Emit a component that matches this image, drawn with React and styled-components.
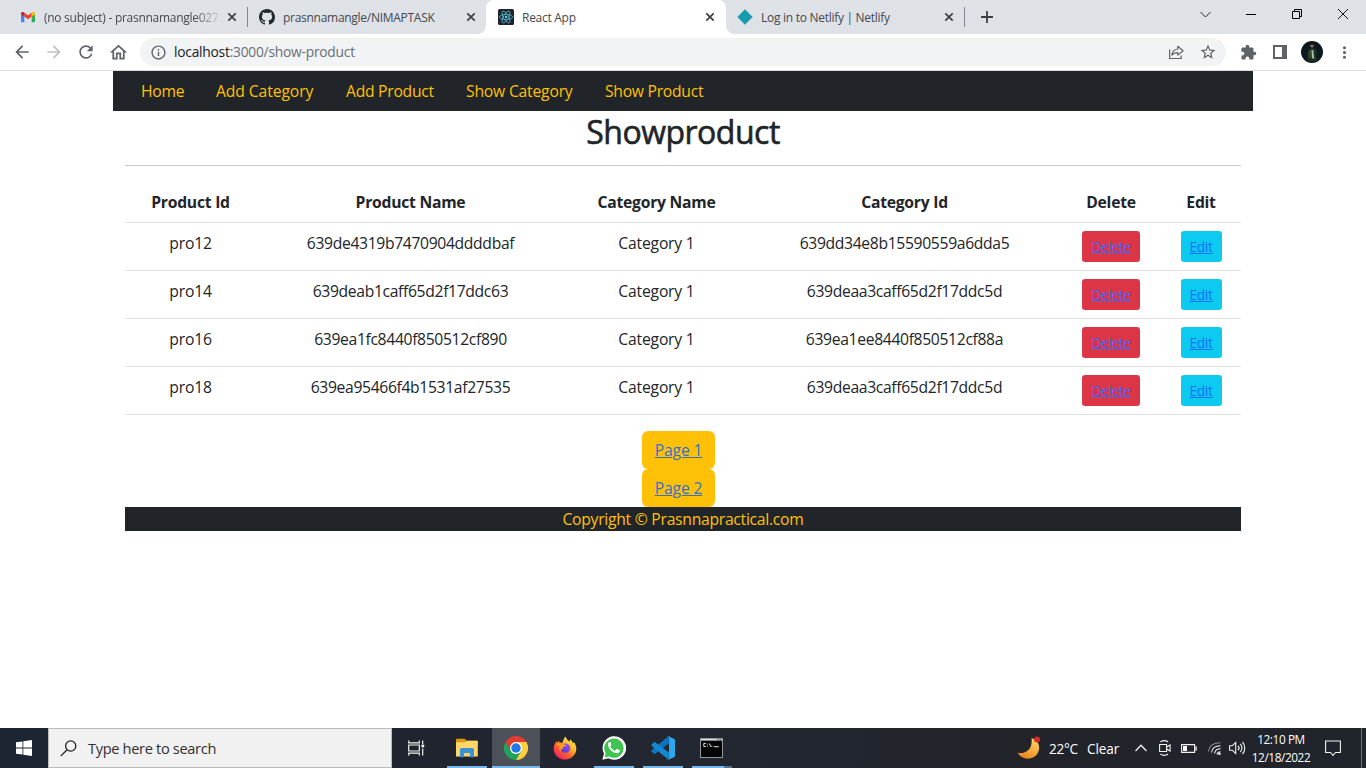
import React from "react";
import styled, { createGlobalStyle } from "styled-components";
import {
  MdArrowBack, MdArrowForward, MdRefresh, MdOutlineHome, MdInfoOutline,
  MdStarBorder, MdExtension, MdMoreVert,
} from "react-icons/md";

const GlobalStyle = createGlobalStyle`
  *, *::before, *::after { box-sizing: border-box; }
  body {
    margin: 0;
    overflow: hidden;
    background: #fff;
    font-family: "Open Sans", "Noto Sans", sans-serif;
  }
  svg { display: block; flex: none; }
`;

const Screen = styled.div`
  width: 1366px;
  height: 768px;
  display: flex;
  flex-direction: column;
`;

/* ---------- browser chrome ---------- */

const TabStrip = styled.div`
  height: 34px;
  flex: none;
  display: flex;
  background: #dee1e6;
  padding-left: 9px;
`;

const Tab = styled.div`
  position: relative;
  width: ${(p) => (p.$active ? 240 : 239)}px;
  height: 34px;
  display: flex;
  align-items: center;
  margin-left: ${(p) => (p.$active ? -1 : 0)}px;
  padding: 0 0 0 ${(p) => (p.$active ? 12 : 11)}px;
  color: #45494d;
  font-size: 12px;
  background: ${(p) => (p.$active ? "#fff" : "transparent")};
  border-radius: 8px 8px 0 0;

  &::before, &::after {
    content: "";
    display: ${(p) => (p.$active ? "block" : "none")};
    position: absolute;
    bottom: 0;
    width: 8px;
    height: 8px;
  }
  &::before {
    left: -8px;
    background: radial-gradient(circle at 0 0, transparent 7.5px, #fff 8px);
  }
  &::after {
    right: -8px;
    background: radial-gradient(circle at 100% 0, transparent 7.5px, #fff 8px);
  }
`;

const TabTitle = styled.span`
  width: 183px;
  margin-left: 8px;
  flex: none;
  white-space: nowrap;
  letter-spacing: -0.28px;
  ${(p) => p.$fade && "mask-image: linear-gradient(90deg, #000 150px, transparent 178px);"}
`;

const TabDivider = styled.i`
  width: 1px;
  height: 20px;
  margin: 7px 0 0 -1px;
  background: #80868b;
`;

const NewTab = styled.div`
  width: 44px;
  height: 34px;
  display: flex;
  align-items: center;
  justify-content: center;
`;

const WindowButtons = styled.div`
  margin-left: auto;
  height: 28px;
  display: flex;
`;

const WindowButton = styled.div`
  width: 46px;
  display: flex;
  align-items: center;
  justify-content: center;
`;

const Toolbar = styled.div`
  height: 37px;
  flex: none;
  display: flex;
  align-items: center;
  padding: 0 6px;
  background: #fff;
  border-bottom: 1px solid #dadce0;
  color: #5f6368;
`;

const ToolButton = styled.div`
  width: 32px;
  height: 32px;
  display: flex;
  align-items: center;
  justify-content: center;
  opacity: ${(p) => (p.$disabled ? 0.4 : 1)};
`;

const Omnibox = styled.div`
  width: 1086px;
  height: 28px;
  margin: 0 6px;
  padding: 0 2px 0 10px;
  border-radius: 14px;
  background: #f1f3f4;
  display: flex;
  align-items: center;
`;

const Url = styled.span`
  margin-left: 7px;
  flex: 1;
  font-size: 13.8px;
  line-height: 20px;
  color: #6b6f74;
  letter-spacing: -0.24px;
  b { font-weight: 400; color: #202124; }
`;

const Avatar = styled.svg`
  border-radius: 50%;
`;

/* ---------- web page ---------- */

const Page = styled.main`
  flex: 1;
  width: 1140px;
  margin: 0 auto;
  color: #212529;
  font-size: 15.7px;
  line-height: 24px;
  letter-spacing: -0.25px;
`;

const Nav = styled.nav`
  height: 40px;
  display: flex;
  padding: 0 12px;
  background: #212529;
`;

const NavLink = styled.a`
  width: ${(p) => p.$width}px;
  padding: 8px 0 8px 16px;
  white-space: nowrap;
  color: #ffc107;
  letter-spacing: ${(p) => p.$spacing ?? -0.27}px;
`;

const Content = styled.div`
  padding: 0 12px;
  text-align: center;
`;

const Heading = styled.h2`
  margin: 0;
  height: 54px;
  font-size: 32px;
  line-height: 41px;
  font-weight: 400;
  letter-spacing: -0.5px;
  -webkit-text-stroke: 0.6px #212529;
`;

const Rule = styled.hr`
  margin: 0 0 17px;
  border: 0;
  height: 1px;
  background: #c8c9ca;
`;

const Table = styled.table`
  width: 1116px;
  margin-bottom: 16px;
  table-layout: fixed;
  border-collapse: separate;
  border-spacing: 0;
`;

const HeadCell = styled.th`
  height: 40px;
  padding: 7px 0 8px;
  font-weight: 700;
  border-bottom: 1px solid #dee2e6;
  letter-spacing: -0.25px;
`;

const Cell = styled.td`
  height: 48px;
  padding: 8px 0;
  vertical-align: top;
  border-bottom: 1px solid #dee2e6;
  letter-spacing: ${(p) => (p.$code ? -0.34 : -0.2)}px;
`;

const SmallButton = styled.a`
  display: flex;
  align-items: center;
  justify-content: center;
  width: ${(p) => p.$width}px;
  height: 31px;
  margin: 0 auto;
  border-radius: 3.2px;
  background: ${(p) => p.$bg};
  color: ${(p) => p.$fg};
  font-size: 13.6px;
  line-height: 21px;
  letter-spacing: -0.3px;
  text-decoration: underline;
  text-decoration-thickness: 1px;
`;

const Pages = styled.div`
  display: flex;
  flex-direction: column;
  align-items: center;
  padding-right: 9px;
`;

const PageButton = styled.a`
  width: 73px;
  height: 38px;
  padding: 7px 0;
  border-radius: 6px;
  background: #ffc107;
  color: #3670cb;
  letter-spacing: -0.15px;
  text-decoration: underline;
  text-decoration-thickness: 1px;
`;

const Footer = styled.footer`
  height: 24px;
  background: #212529;
  color: #ffc107;
  letter-spacing: -0.27px;
`;

/* ---------- taskbar ---------- */

const Taskbar = styled.div`
  height: 40px;
  flex: none;
  display: flex;
  background: linear-gradient(90deg, #1b2632 0, #20242f 32%, #222731 50%, #22242a 75%, #20242b 100%);
  color: #fff;
`;

const StartButton = styled.div`
  width: 48px;
  display: flex;
  align-items: center;
  justify-content: center;
`;

const SearchBox = styled.div`
  width: 344px;
  display: flex;
  align-items: center;
  padding-left: 11px;
  background: #f1f1f1;
  border: 1px solid #b9bbbd;
  color: #303030;
  font-size: 14.6px;
  letter-spacing: -0.33px;
  span { margin-left: 11px; }
`;

const TaskButton = styled.div`
  width: ${(p) => p.$width || 48}px;
  margin-right: ${(p) => p.$gap || 0}px;
  padding-left: ${(p) => p.$indent || 0}px;
  display: flex;
  align-items: center;
  justify-content: center;
  background: ${(p) => (p.$active ? "#4c5058" : "transparent")};
  border-top: 2px solid ${(p) => (p.$active ? "#4c5058" : "transparent")};
  border-bottom: 2px solid ${(p) => (p.$open ? "#76b9ed" : "transparent")};
`;

const MoreWindows = styled.i`
  width: 8px;
  height: 2px;
  align-self: flex-end;
  background: #4e7596;
`;

const Tray = styled.div`
  margin-left: auto;
  display: flex;
  align-items: center;
`;

const Weather = styled.div`
  display: flex;
  align-items: center;
  width: 117px;
  font-size: 13.6px;
  span { margin-left: 9px; letter-spacing: -0.25px; }
  span + span { margin-left: 9px; letter-spacing: -0.1px; }
`;

const TrayIcon = styled.div`
  width: ${(p) => p.$width}px;
  display: flex;
  justify-content: center;
`;

const Clock = styled.div`
  width: 70px;
  text-align: center;
  font-size: 11.8px;
  line-height: 18px;
  letter-spacing: -0.4px;
  white-space: nowrap;
  padding-bottom: 1px;
`;

const ShowDesktop = styled.i`
  width: 5px;
  height: 40px;
  border-left: 1px solid #6c7077;
`;

/* ---------- drawings ---------- */

const Close = () => (
  <svg width="10" height="10" viewBox="0 0 10 10" stroke="#3c4043" strokeWidth="1.7">
    <path d="M1.3 1.3 8.7 8.7M8.7 1.3 1.3 8.7" />
  </svg>
);

const Gmail = () => (
  <svg width="16" height="16" viewBox="0 0 16 16">
    <path fill="#4285f4" d="M1 5v7.2c0 .6.4 1 1 1h2.3V7.4z" />
    <path fill="#34a853" d="M15 5v7.2c0 .6-.4 1-1 1h-2.3V7.4z" />
    <path fill="#ea4335" d="M4.3 3.6v3.9L8 10.2l3.7-2.7V3.6L8 6.4z" />
    <path fill="#c5221f" d="M1 4.4V5.3l3.3 2.5V3.6C2.6 2.3 1 3.2 1 4.4z" />
    <path fill="#fbbc04" d="M15 4.4v.9l-3.3 2.5V3.6C13.4 2.3 15 3.2 15 4.4z" />
  </svg>
);

const GitHub = () => (
  <svg width="16" height="16" viewBox="0 0 16 16" fill="#24292e">
    <path d="M8 0C3.58 0 0 3.58 0 8c0 3.54 2.29 6.53 5.47 7.59.4.07.55-.17.55-.38 0-.19-.01-.82-.01-1.49-2.01.37-2.53-.49-2.69-.94-.09-.23-.48-.94-.82-1.13-.28-.15-.68-.52-.01-.53.63-.01 1.08.58 1.23.82.72 1.21 1.87.87 2.33.66.07-.52.28-.87.51-1.07-1.78-.2-3.64-.89-3.64-3.95 0-.87.31-1.59.82-2.15-.08-.2-.36-1.02.08-2.12 0 0 .67-.21 2.2.82.64-.18 1.32-.27 2-.27s1.36.09 2 .27c1.53-1.04 2.2-.82 2.2-.82.44 1.1.16 1.92.08 2.12.51.56.82 1.27.82 2.15 0 3.07-1.87 3.75-3.65 3.95.29.25.54.73.54 1.48 0 1.07-.01 1.93-.01 2.2 0 .21.15.46.55.38A8.01 8.01 0 0 0 16 8c0-4.42-3.58-8-8-8z" />
  </svg>
);

const ReactLogo = () => (
  <svg width="16" height="16" viewBox="0 0 16 16">
    <rect width="16" height="16" rx="1.5" fill="#20232a" />
    <g fill="none" stroke="#53b9d3" strokeWidth=".8">
      <ellipse cx="8" cy="8" rx="6.6" ry="2.6" />
      <ellipse cx="8" cy="8" rx="6.6" ry="2.6" transform="rotate(60 8 8)" />
      <ellipse cx="8" cy="8" rx="6.6" ry="2.6" transform="rotate(120 8 8)" />
    </g>
    <circle cx="8" cy="8" r="1.2" fill="#61dafb" />
  </svg>
);

const Netlify = () => (
  <svg width="16" height="16" viewBox="0 0 16 16">
    <path fill="#159dad" d="M8 .3 15.6 8 8 15.7.4 8z" />
  </svg>
);

const Share = () => (
  <svg width="16" height="16" viewBox="0 0 16 16" fill="none" stroke="#5f6368" strokeWidth="1.2">
    <path d="M1.6 5.5v9h11.6v-3" />
    <path d="M9.8 2.3 15.1 6.8l-5.3 4.3V8.6c-2.8 0-4.6.8-5.9 2.6.4-3.6 2.400-5.700 5.900-6.200z" strokeLinejoin="round" />
  </svg>
);

const AvatarPicture = () => (
  <Avatar width="22" height="22" viewBox="0 0 22 22">
    <rect width="22" height="22" fill="#0d1a1d" />
    <path fill="#1d3022" d="M6.5 20 7 9.5 10 6.5h3l2.5 3 .5 10.5z" />
    <path fill="#34482a" d="m7 12 2-4 1.5 9H8z" />
    <path fill="#a9b7b0" d="M10.3 9h2l1 8.5h-2.2z" />
    <circle cx="11" cy="4.5" r="1.9" fill="#8d6d5d" />
    <path fill="#080a0b" d="M9 4.200c0-3 4-3 4 0l-2-.8z" />
  </Avatar>
);

const Windows = () => (
  <svg width="16" height="16" viewBox="0 0 16 16" fill="#fff">
    <path d="M0 2.3 6.5 1.4v6.200H0zM7.300 1.300 16 .1v7.500H7.300zM0 8.400h6.500v6.200L0 13.700zM7.300 8.400H16v7.500l-8.700-1.200z" />
  </svg>
);

const SearchGlyph = () => (
  <svg width="17" height="17" viewBox="0 0 17 17" fill="none" stroke="#202020" strokeWidth="1.3">
    <circle cx="10.7" cy="6" r="5.1" />
    <path d="M7.1 9.7.7 16.1" />
  </svg>
);

const TaskView = () => (
  <svg width="17" height="16" viewBox="0 0 17 16" fill="none" stroke="#f2f2f2" strokeWidth="1.2">
    <path d="M.7.4v2.5h10.600V.4M.7 15.600v-2.500h10.600v2.500M.7 5h10.600v6H.7z" />
    <path d="M14.700.4V4M14.700 8.400v7.200" />
    <path d="M13.500 4.600h2.700v2.700h-2.700z" fill="#fff" stroke="none" />
  </svg>
);

const Explorer = () => (
  <svg width="22" height="20" viewBox="0 0 22 20">
    <path fill="#dc9b0c" d="M0 1.500C0 1 .4.700.8.700h8l1.500 2.100H21c.6 0 .8.300.8.800v3H0z" />
    <path fill="#ffd768" d="M0 4.300h9.300l1.300-1.500H21c.6 0 .8.300.8.800V18.400H0z" />
    <path fill="#3b91d3" d="M4 19.300v-7.500c0-1 .7-1.800 1.700-1.800h10.600c1 0 1.700.8 1.700 1.800v7.500h-4V15.800c0-.5-.3-.8-.8-.8H8.800c-.5 0-.8.3-.8.800v3.500z" />
  </svg>
);

const Chrome = () => (
  <svg width="24" height="24" viewBox="0 0 48 48">
    <path fill="#1da55c" d="M24 24 34.400 30 24 48A24 24 0 0 1 3.200 12L13.600 30z" />
    <path fill="#ffcd40" d="M34.400 30 24 48a24 24 0 0 0 20.800-36H24z" />
    <path fill="#e33b2e" d="M3.200 12 13.600 30 24 24V12h20.800A24 24 0 0 0 3.200 12z" />
    <circle cx="24" cy="24" r="12" fill="#fff" />
    <circle cx="24" cy="24" r="9.500" fill="#2378e8" />
  </svg>
);

const Firefox = () => (
  <svg width="24" height="24" viewBox="0 0 24 24">
    <defs>
      <linearGradient id="fx" x1=".85" y1=".1" x2=".2" y2=".95">
        <stop offset="0" stopColor="#fff14f" />
        <stop offset=".35" stopColor="#ffb32b" />
        <stop offset=".65" stopColor="#ff5d35" />
        <stop offset="1" stopColor="#ef1c63" />
      </linearGradient>
      <linearGradient id="fy" x1=".8" y1="0" x2=".2" y2="1">
        <stop offset="0" stopColor="#9b4dff" />
        <stop offset="1" stopColor="#5a3ac0" />
      </linearGradient>
    </defs>
    <path fill="url(#fx)" d="M12.700.4c.3 2.700 2.400 3.700 4.200 5.200l.3-2.400c1.500 1.100 2.300 2.700 2.700 4.200l1.100-1.300c1.500 2.400 2.300 4.500 2.300 6.700C23.300 18.700 18.400 23.600 12 23.600S.7 18.900.7 12.700c0-3.400 1.500-5.700 3.300-7.600v2.100l1.800-2.500.6 1.900c1.200-.3 2.200-.1 3 .4.900-2.700 1.300-5.300 3.300-6.600z" />
    <circle cx="12.400" cy="12.200" r="4.800" fill="url(#fy)" />
    <path fill="#ff9a24" d="M3.400 8.600C5 6.300 7.500 6.500 9.200 7.500c1.300 1 2.700 1 4.300 1.500-.4 1.300-2.200 1.500-3.400 2.100-.8.500.2 1.700-1 2-1.200.4-1.900.8-1.600 2.500-1.800-1.500-1.300-4.500-.3-5.500-1.400-.6-2.600-.8-3.800-1.500z" />
  </svg>
);

const WhatsApp = () => (
  <svg width="24" height="24" viewBox="0 0 24 24">
    <path fill="#fff" d="M.3 23.800 2 17.700A11.800 11.800 0 1 1 6.400 22.200z" />
    <path fill="#3fc351" d="m2.500 21.600 1.200-4.200a9.700 9.700 0 1 1 3.200 3.100z" />
    <path fill="#fff" d="M8.900 6.700c-.3-.6-.5-.6-.9-.6-.9 0-2 1-2 2.600 0 1.500 1 2.900 1.200 3.200 2.200 3.300 4.500 4.900 7.300 5.400 1.500.2 3-.8 3.300-1.700.2-.8.300-1.200-.1-1.400l-2.500-1.200c-.3-.1-.6-.2-.8.200l-1 1.200c-.2.300-.4.300-.8.100-2.100-.9-3.100-2-4.100-3.700-.2-.3 0-.5.700-1.500.1-.2.100-.4 0-.6z" />
  </svg>
);

const VsCode = () => (
  <svg width="24" height="24" viewBox="0 0 24 24">
    <path fill="#0b74bd" d="M17.500.3 18 7.500 4.200 17.700c-.4.300-.9.300-1.200 0L.5 15.500c-.4-.4-.4-1 0-1.300z" />
    <path fill="#1389d3" d="M17.500 23.700 18 16.500 4.200 6.300c-.4-.3-.9-.3-1.200 0L.5 8.500c-.4.400-.4 1 0 1.300z" />
    <path fill="#2ba7ef" d="M17.500.3 23.400 3c.4.200.6.500.6 1v16c0 .5-.2.800-.6 1l-5.900 2.700c-.7.300-1.400 0-1.600-.2 1 .4 2.100-.2 2.100-1.300V1.800c0-1.100-1.100-1.700-2.100-1.300.2-.2.900-.5 1.600-.2z" />
  </svg>
);

const Terminal = () => (
  <svg width="23" height="20" viewBox="0 0 23 20">
    <rect x=".5" y=".5" width="22" height="19" fill="#050505" stroke="#92979c" />
    <path fill="#d9dde1" d="M1 1h21v1.600H1z" />
    <path fill="#5b6670" d="M17 1h1.500v1.500H17zM19.500 1H21v1.500h-1.500z" />
    <path fill="none" stroke="#e4e4e4" strokeWidth="1" d="M5.800 5.500H3.800v3h2M7.500 5.800v.8M7.500 7.800v.8M9.300 5.500l1.700 3.300M11.800 7.700v1M13.800 8.700h5" />
  </svg>
);

const Moon = () => (
  <svg width="23" height="24" viewBox="0 0 23 24">
    <defs>
      <linearGradient id="moon" x1=".8" y1="0" x2=".4" y2="1">
        <stop offset="0" stopColor="#ffd667" />
        <stop offset="1" stopColor="#ee8620" />
      </linearGradient>
    </defs>
    <path fill="url(#moon)" d="M14.500 2.200C21 3.500 24 10.500 21 16.500c-3.700 7.500-15 8.900-20.500.3C7.500 18 16 14.500 14.500 2.200z" />
    <circle cx="20" cy="3.500" r="3" fill="#d92c27" />
  </svg>
);

const line = { fill: "none", stroke: "#f2f2f2", strokeWidth: 1.1 };

const products = [
  ["pro12", "639de4319b7470904ddddbaf", "Category 1", "639dd34e8b15590559a6dda5"],
  ["pro14", "639deab1caff65d2f17ddc63", "Category 1", "639deaa3caff65d2f17ddc5d"],
  ["pro16", "639ea1fc8440f850512cf890", "Category 1", "639ea1ee8440f850512cf88a"],
  ["pro18", "639ea95466f4b1531af27535", "Category 1", "639deaa3caff65d2f17ddc5d"],
];

const columns = [131, 309, 183, 313, 100, 80];
const headings = ["Product Id", "Product Name", "Category Name", "Category Id", "Delete", "Edit"];

export default function App() {
  return (
    <Screen>
      <GlobalStyle />
      <TabStrip>
        <Tab><Gmail /><TabTitle $fade>(no subject) - prasnnamangle027</TabTitle><Close /></Tab>
        <TabDivider />
        <Tab><GitHub /><TabTitle>prasnnamangle/NIMAPTASK</TabTitle><Close /></Tab>
        <Tab $active><ReactLogo /><TabTitle>React App</TabTitle><Close /></Tab>
        <Tab><Netlify /><TabTitle>Log in to Netlify | Netlify</TabTitle><Close /></Tab>
        <TabDivider />
        <NewTab>
          <svg width="12" height="12" viewBox="0 0 12 12" stroke="#3c4043" strokeWidth="1.8"><path d="M6 0v12M0 6h12" /></svg>
        </NewTab>
        <WindowButtons>
          <WindowButton><svg width="11" height="11" viewBox="0 0 11 11" fill="none" stroke="#222"><path d="m.5 3 5 5 5-5" /></svg></WindowButton>
          <WindowButton><svg width="10" height="10" viewBox="0 0 10 10" fill="none" stroke="#000"><path d="M0 5.5h10" /></svg></WindowButton>
          <WindowButton><svg width="10" height="10" viewBox="0 0 10 10" fill="none" stroke="#000"><path d="M.5 2.5h7v7h-7zM2.5 2.5v-2h7v7h-2" /></svg></WindowButton>
          <WindowButton><svg width="10" height="10" viewBox="0 0 10 10" fill="none" stroke="#111"><path d="m0 0 10 10M10 0 0 10" /></svg></WindowButton>
        </WindowButtons>
      </TabStrip>

      <Toolbar>
        <ToolButton><MdArrowBack size={20} /></ToolButton>
        <ToolButton $disabled><MdArrowForward size={20} /></ToolButton>
        <ToolButton><MdRefresh size={20} /></ToolButton>
        <ToolButton><MdOutlineHome size={21} /></ToolButton>
        <Omnibox>
          <MdInfoOutline size={17} />
          <Url><b>localhost</b>:3000/show-product</Url>
          <ToolButton><Share /></ToolButton>
          <ToolButton><MdStarBorder size={18} /></ToolButton>
        </Omnibox>
        <ToolButton><MdExtension size={17} /></ToolButton>
        <ToolButton>
          <svg width="14" height="14" viewBox="0 0 14 14" fill="#5f6368"><path fillRule="evenodd" d="M0 0h14v14H0zM2 2v10h7V2z" /></svg>
        </ToolButton>
        <ToolButton><AvatarPicture /></ToolButton>
        <ToolButton><MdMoreVert size={19} /></ToolButton>
      </Toolbar>

      <Page>
        <Nav>
          <NavLink $width={75}>Home</NavLink>
          <NavLink $width={130} $spacing={-0.1}>Add Category</NavLink>
          <NavLink $width={120}>Add Product</NavLink>
          <NavLink $width={139} $spacing={-0.2}>Show Category</NavLink>
          <NavLink $width={130}>Show Product</NavLink>
        </Nav>
        <Content>
          <Heading>Showproduct</Heading>
          <Rule />
          <Table>
            <colgroup>{columns.map((w, i) => <col key={i} width={w} />)}</colgroup>
            <thead>
              <tr>{headings.map((h) => <HeadCell key={h}>{h}</HeadCell>)}</tr>
            </thead>
            <tbody>
              {products.map((row) => (
                <tr key={row[0]}>
                  {row.map((value, i) => <Cell key={i} $code={i % 2 === 1}>{value}</Cell>)}
                  <Cell><SmallButton $width={58} $bg="#dc3545" $fg="#4f62ee">Delete</SmallButton></Cell>
                  <Cell><SmallButton $width={41} $bg="#0dcaf0" $fg="#0d6efd">Edit</SmallButton></Cell>
                </tr>
              ))}
            </tbody>
          </Table>
          <Pages>
            <PageButton>Page 1</PageButton>
            <PageButton>Page 2</PageButton>
          </Pages>
          <Footer>Copyright © Prasnnapractical.com</Footer>
        </Content>
      </Page>

      <Taskbar>
        <StartButton><Windows /></StartButton>
        <SearchBox><SearchGlyph /><span>Type here to search</span></SearchBox>
        <TaskButton $gap={7}><TaskView /></TaskButton>
        <TaskButton $width={40} $gap={5} $open><Explorer /></TaskButton>
        <TaskButton $active $open><Chrome /></TaskButton>
        <TaskButton $width={49} $gap={5}><Firefox /></TaskButton>
        <TaskButton $width={40} $gap={9} $open><WhatsApp /></TaskButton>
        <TaskButton $width={40} $gap={9} $open><VsCode /></TaskButton>
        <TaskButton $width={32} $indent={7} $open><Terminal /></TaskButton>
        <MoreWindows />
        <Tray>
          <Weather><Moon /><span>22°C</span><span>Clear</span></Weather>
          <TrayIcon $width={14}>
            <svg width="12" height="8" viewBox="0 0 12 8" {...line} strokeWidth="1.3"><path d="m.5 7 5.5-5.7L11.5 7" /></svg>
          </TrayIcon>
          <TrayIcon $width={34}>
            <svg width="12" height="16" viewBox="0 0 12 16" {...line}><path d="M.6 4.5h7v7h-7zM7.6 7l3.500-2v6l-3.500-2M1.500 2C3.500.200 7 .200 9 2M1.500 14c2 1.800 5.500 1.800 7.500 0" /></svg>
          </TrayIcon>
          <TrayIcon $width={14}>
            <svg width="16" height="9" viewBox="0 0 16 9" {...line}><path d="M.6.6h13v7.800H.6zM13.600 3h1.600v3h-1.600" /><path fill="#fff" stroke="none" d="M2 2h4v5H2z" /></svg>
          </TrayIcon>
          <TrayIcon $width={36}>
            <svg width="13" height="13" viewBox="0 0 13 13" {...line}><path stroke="#8b8d91" d="M.5 9.500C1 4.500 5 .7 12.500.7" /><path d="M3.500 10.500c.5-4 3.500-6.800 9-6.800M6.500 11.500c.5-2.800 2.500-4.800 6-4.800M9 12.500c.3-1.500 1.500-2.800 3.500-2.800" /><circle cx="11.500" cy="11.700" r="1.200" fill="#fff" stroke="none" /></svg>
          </TrayIcon>
          <TrayIcon $width={10}>
            <svg width="17" height="14" viewBox="0 0 17 14" {...line}><path d="M.6 4.800h2.600L6.700 1.500v11L3.200 9.200H.6zM9 4.800c1.200 1.200 1.200 3.200 0 4.400M11.200 2.900c2.200 2.200 2.200 6 0 8.200M13.500 1c3 3.200 3 8.800 0 12" /></svg>
          </TrayIcon>
          <TrayIcon $width={4} />
          <Clock><div>12:10 PM</div><div>12/18/2022</div></Clock>
          <TrayIcon $width={34}>
            <svg width="16" height="17" viewBox="0 0 16 17" {...line}><path d="M.6 1h14.800v11.500H10.500L8 15.300 5.500 12.500H.6z" /></svg>
          </TrayIcon>
          <TrayIcon $width={11} />
          <ShowDesktop />
        </Tray>
      </Taskbar>
    </Screen>
  );
}
